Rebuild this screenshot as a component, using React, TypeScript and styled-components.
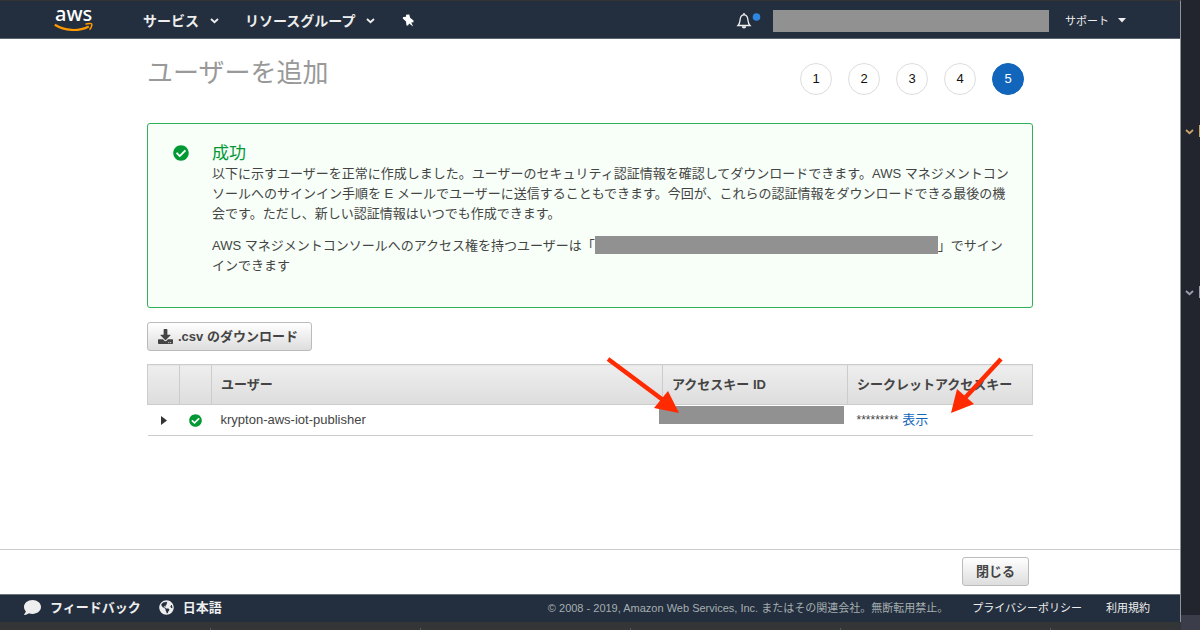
import React from "react";
import styled, { createGlobalStyle } from "styled-components";
import { FaDownload, FaCheckCircle, FaComment, FaGlobeAmericas } from "react-icons/fa";

const GlobalStyle = createGlobalStyle`
  * { box-sizing: border-box; }
  body {
    margin: 0;
    background: #fff;
    color: #444;
    font: 13px/20px "Liberation Sans", "Noto Sans CJK JP", sans-serif;
  }
  button { font: inherit; cursor: pointer; }
`;

const Desktop = styled.div`
  display: grid;
  grid-template-columns: 1fr 19px;
  grid-template-rows: 1fr 8px;
  min-height: 100vh;
`;

const Page = styled.div`
  display: flex;
  flex-direction: column;
  border-top: 1px solid #333;
  border-right: 1px solid #8f9499;
`;

const Header = styled.header`
  display: flex;
  align-items: center;
  height: 38px;
  padding: 2px 54px 0;
  background: #232f3e;
  border-bottom: 1px solid #5b6570;
  color: #eee;
`;

const Logo = styled.svg`
  display: block;
  width: 40px;
  height: 26px;
  overflow: visible;
`;

const LogoText = styled.text`
  fill: #fff;
  font: 500 20px "Noto Sans", "Open Sans", sans-serif;
`;

const NavButton = styled.button<{ $minor?: boolean }>`
  display: flex;
  align-items: center;
  gap: ${(p) => (p.$minor ? 9 : 11)}px;
  padding: 0;
  border: 0;
  background: none;
  color: inherit;
  font-size: ${(p) => (p.$minor ? 11 : 14)}px;
  font-weight: ${(p) => (p.$minor ? 400 : 700)};
  white-space: nowrap;
`;

const Nav = styled.nav`
  display: flex;
  align-items: center;
  gap: 26px;
  margin-left: 49px;
`;

const Account = styled.div`
  display: flex;
  align-items: center;
  margin-left: auto;
`;

const Redacted = styled.span<{ $w: number; $h: number }>`
  display: inline-block;
  width: ${(p) => p.$w}px;
  height: ${(p) => p.$h}px;
  background: #919191;
  vertical-align: -4px;
`;

const AccountName = styled(Redacted)`
  margin: 0 16px 0 12px;
`;

const Main = styled.main`
  flex: 1;
  padding: 19px 147px 0;
`;

const TitleRow = styled.div`
  display: flex;
  justify-content: space-between;
  align-items: flex-start;
  margin-bottom: 28px;
`;

const Title = styled.h1`
  margin: 0;
  color: #999;
  font-size: 26px;
  line-height: 30px;
  font-weight: 400;
`;

const Steps = styled.ol`
  display: flex;
  gap: 16px;
  margin: 5px 9px 0 0;
  padding: 0;
  list-style: none;
`;

const Step = styled.li<{ $current?: boolean }>`
  display: flex;
  align-items: center;
  justify-content: center;
  width: 32px;
  height: 32px;
  border: 1px solid ${(p) => (p.$current ? "#1166bb" : "#ddd")};
  border-radius: 50%;
  background: ${(p) => (p.$current ? "#1166bb" : "#fff")};
  color: ${(p) => (p.$current ? "#fff" : "#111")};
`;

const Alert = styled.section`
  display: flex;
  padding: 20px 17px 19px 25px;
  border: 1px solid #2eb157;
  border-radius: 3px;
  background: #f7fff8;
`;

const AlertIcon = styled.div`
  flex: 0 0 39px;
  padding-top: 1px;
  color: #009933;
  font-size: 16px;
`;

const AlertTitle = styled.h2`
  margin: 0;
  color: #009933;
  font-size: 17px;
  line-height: 20px;
  font-weight: 400;
`;

const AlertText = styled.p`
  margin: 0 0 12px;
`;

const Button = styled.button`
  display: inline-flex;
  align-items: center;
  gap: 5px;
  height: 29px;
  padding: 0 13px;
  border: 1px solid #bbb;
  border-radius: 3px;
  background: linear-gradient(#fff, #ddd);
  color: #444;
  font-weight: 700;
  white-space: nowrap;
`;

const DownloadButton = styled(Button)`
  margin: 14px 0 13px;
  padding: 0 13px 0 10px;
`;

const TableArea = styled.div`
  position: relative;
`;

const Table = styled.table`
  width: 100%;
  table-layout: fixed;
  border-collapse: collapse;
`;

const Th = styled.th`
  height: 40px;
  padding: 0 9px;
  border: 1px solid #ccc;
  background: linear-gradient(#eee, #ddd);
  text-align: left;
  white-space: nowrap;
`;

const Td = styled.td<{ $center?: boolean }>`
  position: relative;
  height: 31px;
  padding: 0 9px;
  border-bottom: 1px solid #ccc;
  text-align: ${(p) => (p.$center ? "center" : "left")};
  white-space: nowrap;
`;

const KeyMask = styled(Redacted)`
  position: absolute;
  top: 1px;
  left: -4px;
`;

const Expand = styled.button`
  display: block;
  margin: 0 auto;
  padding: 0;
  border: 0;
  background: none;
  line-height: 0;
`;

const Tick = styled(FaCheckCircle)`
  display: block;
  margin: 0 auto;
  color: #009933;
`;

const Secret = styled.span`
  font-size: 12px;
`;

const Link = styled.a`
  color: #1166bb;
  text-decoration: none;
`;

const Arrow = styled.svg<{ $right: number }>`
  position: absolute;
  top: -8px;
  right: ${(p) => p.$right}px;
  pointer-events: none;
`;

const Actions = styled.div`
  display: flex;
  justify-content: flex-end;
  padding: 7px 151px 8px;
  border-top: 1px solid #ccc;
`;

const Footer = styled.footer`
  display: flex;
  align-items: center;
  height: 28px;
  padding: 0 30px 2px 24px;
  border-top: 1px solid #6b747e;
  background: #232f3e;
  color: #eee;
`;

const FooterButton = styled(NavButton)`
  gap: 9px;
  margin-right: 18px;
  font-size: 13px;
`;

const Legal = styled.div`
  display: flex;
  gap: 24px;
  margin-left: auto;
  font-size: 11px;
  white-space: nowrap;
`;

const Copyright = styled.span`
  color: #a5aeb0;
`;

const FooterLink = styled.a`
  color: #eee;
  text-decoration: none;
`;

const EditorEdge = styled.aside`
  display: flex;
  flex-direction: column;
  grid-row: 1 / 3;
  grid-column: 2;
  background: #22252d;
`;

const Fold = styled.div<{ $before: number; $color: string }>`
  display: flex;
  align-items: center;
  justify-content: space-between;
  height: 14px;
  margin-top: ${(p) => p.$before}px;
  padding-left: 4px;
  color: ${(p) => p.$color};
  &::after {
    content: "";
    width: 1px;
    height: 12px;
    background: currentColor;
  }
`;

const EdgeStatus = styled.div`
  height: 15px;
  margin-top: auto;
  background: #3b3d4b;
`;

const WindowBottom = styled.div`
  background: #333536 repeating-linear-gradient(90deg, transparent 0 209px, #55585a 209px 210px) 1px 6px no-repeat;
`;

const Chevron = () => (
  <svg width="9" height="9" viewBox="0 0 9 9" fill="none" stroke="currentColor" strokeWidth="1.8">
    <path d="M1 3l3.5 3.2L8 3" />
  </svg>
);

export default function App() {
  return (
    <>
      <GlobalStyle />
      <Desktop>
        <Page>
          <Header>
            <Logo viewBox="0 0 40 26" role="img" aria-label="aws">
              <LogoText x="1" y="13">aws</LogoText>
              <path d="M.8 16.8c10 6.200 23.500 7 34 1.600" fill="none" stroke="#f90" strokeWidth="2.200" />
              <path d="M31.500 16.200c2.500-1 6-.8 6.300-.2.300.6-.4 4-2.300 5.600" fill="none" stroke="#f90" strokeWidth="1.500" />
            </Logo>
            <Nav>
              <NavButton>サービス<Chevron /></NavButton>
              <NavButton>リソースグループ<Chevron /></NavButton>
              <NavButton aria-label="ピン留め">
                <svg width="14" height="13" viewBox="-1 0 13 13" fill="#fff">
                  <path d="M3.500.8L6.800.4 7.600 3.800 11 6.600V8.200L8.700 8.600 10.700 12.500 6.600 9.600 5.600 11.600 4 11.400 3.500 7.600.3 4.600.6 3 3.600 2.800z" />
                </svg>
              </NavButton>
            </Nav>
            <Account>
              <NavButton aria-label="通知">
                <svg width="25" height="20" viewBox="0 0 25 20">
                  <path d="M2 14.500c2-2 1.800-3.500 2.200-6.500C4.600 5 6 3.800 8 3.800S11.400 5 11.800 8c.4 3 .2 4.500 2.200 6.500z" fill="none" stroke="#eee" strokeWidth="1.300" />
                  <path d="M8 2v2" stroke="#eee" strokeWidth="1.500" />
                  <path d="M5.800 15.200h4.400a2.200 2.200 0 0 1-4.400 0z" fill="#eee" />
                  <circle cx="20.500" cy="6" r="3.800" fill="#2e86de" />
                </svg>
              </NavButton>
              <AccountName $w={276} $h={22} />
              <NavButton $minor>
                サポート
                <svg width="8" height="5" viewBox="0 0 8 5" fill="currentColor"><path d="M0 0h8L4 4.500z" /></svg>
              </NavButton>
            </Account>
          </Header>
          <Main>
            <TitleRow>
              <Title>ユーザーを追加</Title>
              <Steps>
                {[1, 2, 3, 4, 5].map((n) => (
                  <Step key={n} $current={n === 5}>{n}</Step>
                ))}
              </Steps>
            </TitleRow>
            <Alert>
              <AlertIcon><FaCheckCircle /></AlertIcon>
              <div>
                <AlertTitle>成功</AlertTitle>
                <AlertText>
                  以下に示すユーザーを正常に作成しました。ユーザーのセキュリティ認証情報を確認してダウンロードできます。AWS マネジメントコンソールへのサインイン手順を E メールでユーザーに送信することもできます。今回が、これらの認証情報をダウンロードできる最後の機会です。ただし、新しい認証情報はいつでも作成できます。
                </AlertText>
                <AlertText>
                  AWS マネジメントコンソールへのアクセス権を持つユーザーは「<Redacted $w={343} $h={18} />」でサイン<wbr />インできます
                </AlertText>
              </div>
            </Alert>
            <DownloadButton><FaDownload size={15} />.csv のダウンロード</DownloadButton>
            <TableArea>
              <Table>
                <colgroup>
                  <col style={{ width: 32 }} />
                  <col style={{ width: 32 }} />
                  <col />
                  <col style={{ width: 185 }} />
                  <col style={{ width: 185 }} />
                </colgroup>
                <thead>
                  <tr>
                    <Th aria-label="詳細" />
                    <Th aria-label="状態" />
                    <Th>ユーザー</Th>
                    <Th>アクセスキー ID</Th>
                    <Th>シークレットアクセスキー</Th>
                  </tr>
                </thead>
                <tbody>
                  <tr>
                    <Td $center>
                      <Expand aria-label="展開">
                        <svg width="6" height="9" viewBox="0 0 6 9" fill="#333"><path d="M0 0l6 4.500L0 9z" /></svg>
                      </Expand>
                    </Td>
                    <Td><Tick size={13} /></Td>
                    <Td>krypton-aws-iot-publisher</Td>
                    <Td><KeyMask $w={185} $h={18} /></Td>
                    <Td><Secret>*********</Secret> <Link href="#show">表示</Link></Td>
                  </tr>
                </tbody>
              </Table>
              <Arrow $right={352} width="76" height="60" viewBox="0 0 76 60">
                <path d="M3 3L58 44" stroke="#ff2a00" strokeWidth="4.500" />
                <path d="M74 57L49 52 63 35z" fill="#ff2a00" />
              </Arrow>
              <Arrow $right={27} width="58" height="60" viewBox="0 0 58 60">
                <path d="M53 3L16 43" stroke="#ff2a00" strokeWidth="4.500" />
                <path d="M3 57L9 33 26 48z" fill="#ff2a00" />
              </Arrow>
            </TableArea>
          </Main>
          <Actions><Button>閉じる</Button></Actions>
          <Footer>
            <FooterButton><FaComment size={17} />フィードバック</FooterButton>
            <FooterButton><FaGlobeAmericas size={15} />日本語</FooterButton>
            <Legal>
              <Copyright>© 2008 - 2019, Amazon Web Services, Inc. またはその関連会社。無断転用禁止。</Copyright>
              <FooterLink href="#privacy">プライバシーポリシー</FooterLink>
              <FooterLink href="#terms">利用規約</FooterLink>
            </Legal>
          </Footer>
        </Page>
        <EditorEdge>
          <Fold $before={124} $color="#c9a36a"><Chevron /></Fold>
          <Fold $before={147} $color="#9aa0ab"><Chevron /></Fold>
          <EdgeStatus />
        </EditorEdge>
        <WindowBottom />
      </Desktop>
    </>
  );
}
